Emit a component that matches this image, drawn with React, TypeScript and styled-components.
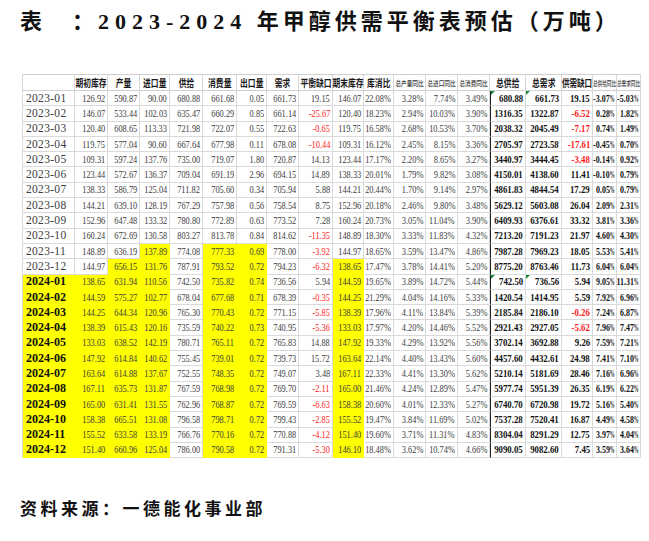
import React from "react";
import styled, { createGlobalStyle } from "styled-components";

type Column = {
  label: string;
  width: number;
  small?: boolean;
  headScale: number;
  textScale: number;
};

const columns: Column[] = [
  { label: "", width: 53, headScale: 1, textScale: 1 },
  { label: "期初库存", width: 33, headScale: 0.74, textScale: 0.76 },
  { label: "产量", width: 32, headScale: 0.74, textScale: 0.76 },
  { label: "进口量", width: 30, headScale: 0.74, textScale: 0.76 },
  { label: "供给", width: 33, headScale: 0.74, textScale: 0.76 },
  { label: "消费量", width: 34, headScale: 0.74, textScale: 0.76 },
  { label: "出口量", width: 30, headScale: 0.74, textScale: 0.76 },
  { label: "需求", width: 32, headScale: 0.74, textScale: 0.76 },
  { label: "平衡缺口", width: 34, headScale: 0.74, textScale: 0.76 },
  { label: "期末库存", width: 31, headScale: 0.74, textScale: 0.76 },
  { label: "库消比", width: 30, headScale: 0.74, textScale: 0.76 },
  { label: "总产量同比", width: 32, small: true, headScale: 0.8, textScale: 0.76 },
  { label: "总进口同比", width: 32, small: true, headScale: 0.8, textScale: 0.76 },
  { label: "总消费同比", width: 32, small: true, headScale: 0.8, textScale: 0.76 },
  { label: "总供给", width: 36, headScale: 0.74, textScale: 0.8 },
  { label: "总需求", width: 36, headScale: 0.74, textScale: 0.8 },
  { label: "供需缺口", width: 31, headScale: 0.72, textScale: 0.8 },
  { label: "总供给同比", width: 24, small: true, headScale: 0.66, textScale: 0.72 },
  { label: "总需求同比", width: 24, small: true, headScale: 0.66, textScale: 0.72 },
];

const data = `
2023-01 126.92 590.87 90.00 680.88 661.68 0.05 661.73 19.15 146.07 22.08% 3.28% 7.74% 3.49% 680.88 661.73 19.15 -3.07% -5.03%
2023-02 146.07 533.44 102.03 635.47 660.29 0.85 661.14 -25.67 120.40 18.23% 2.94% 10.03% 3.90% 1316.35 1322.87 -6.52 0.28% 1.82%
2023-03 120.40 608.65 113.33 721.98 722.07 0.55 722.63 -0.65 119.75 16.58% 2.68% 10.53% 3.70% 2038.32 2045.49 -7.17 0.74% 1.49%
2023-04 119.75 577.04 90.60 667.64 677.98 0.11 678.08 -10.44 109.31 16.12% 2.45% 8.15% 3.36% 2705.97 2723.58 -17.61 -0.45% 0.70%
2023-05 109.31 597.24 137.76 735.00 719.07 1.80 720.87 14.13 123.44 17.17% 2.20% 8.65% 3.27% 3440.97 3444.45 -3.48 -0.14% 0.92%
2023-06 123.44 572.67 136.37 709.04 691.19 2.96 694.15 14.89 138.33 20.01% 1.79% 9.82% 3.08% 4150.01 4138.60 11.41 -0.10% 0.79%
2023-07 138.33 586.79 125.04 711.82 705.60 0.34 705.94 5.88 144.21 20.44% 1.70% 9.14% 2.97% 4861.83 4844.54 17.29 0.05% 0.79%
2023-08 144.21 639.10 128.19 767.29 757.98 0.56 758.54 8.75 152.96 20.18% 2.46% 9.80% 3.48% 5629.12 5603.08 26.04 2.09% 2.31%
2023-09 152.96 647.48 133.32 780.80 772.89 0.63 773.52 7.28 160.24 20.73% 3.05% 11.04% 3.90% 6409.93 6376.61 33.32 3.81% 3.36%
2023-10 160.24 672.69 130.58 803.27 813.78 0.84 814.62 -11.35 148.89 18.30% 3.33% 11.83% 4.32% 7213.20 7191.23 21.97 4.60% 4.30%
2023-11 148.89 636.19 137.89 774.08 777.33 0.69 778.00 -3.92 144.97 18.65% 3.59% 13.47% 4.86% 7987.28 7969.23 18.05 5.53% 5.41%
2023-12 144.97 656.15 131.76 787.91 793.52 0.72 794.23 -6.32 138.65 17.47% 3.78% 14.41% 5.20% 8775.20 8763.46 11.73 6.04% 6.04%
2024-01 138.65 631.94 110.56 742.50 735.82 0.74 736.56 5.94 144.59 19.65% 3.89% 14.72% 5.44% 742.50 736.56 5.94 9.05% 11.31%
2024-02 144.59 575.27 102.77 678.04 677.68 0.71 678.39 -0.35 144.25 21.29% 4.04% 14.16% 5.33% 1420.54 1414.95 5.59 7.92% 6.96%
2024-03 144.25 644.34 120.96 765.30 770.43 0.72 771.15 -5.85 138.39 17.96% 4.11% 13.84% 5.39% 2185.84 2186.10 -0.26 7.24% 6.87%
2024-04 138.39 615.43 120.16 735.59 740.22 0.73 740.95 -5.36 133.03 17.97% 4.20% 14.46% 5.52% 2921.43 2927.05 -5.62 7.96% 7.47%
2024-05 133.03 638.52 142.19 780.71 765.11 0.72 765.83 14.88 147.92 19.33% 4.29% 13.92% 5.56% 3702.14 3692.88 9.26 7.59% 7.21%
2024-06 147.92 614.84 140.62 755.45 739.01 0.72 739.73 15.72 163.64 22.14% 4.40% 13.43% 5.60% 4457.60 4432.61 24.98 7.41% 7.10%
2024-07 163.64 614.88 137.67 752.55 748.35 0.72 749.07 3.48 167.11 22.33% 4.41% 13.30% 5.62% 5210.14 5181.69 28.46 7.16% 6.96%
2024-08 167.11 635.73 131.87 767.59 768.98 0.72 769.70 -2.11 165.00 21.46% 4.24% 12.89% 5.47% 5977.74 5951.39 26.35 6.19% 6.22%
2024-09 165.00 631.41 131.55 762.96 768.87 0.72 769.59 -6.63 158.38 20.60% 4.01% 12.33% 5.27% 6740.70 6720.98 19.72 5.16% 5.40%
2024-10 158.38 665.51 131.08 796.58 798.71 0.72 799.43 -2.85 155.52 19.47% 3.84% 11.69% 5.02% 7537.28 7520.41 16.87 4.49% 4.58%
2024-11 155.52 633.58 133.19 766.76 770.16 0.72 770.88 -4.12 151.40 19.60% 3.71% 11.31% 4.83% 8304.04 8291.29 12.75 3.97% 4.04%
2024-12 151.40 660.96 125.04 786.00 790.58 0.72 791.31 -5.30 146.10 18.48% 3.62% 10.74% 4.66% 9090.05 9082.60 7.45 3.59% 3.64%
`
  .trim()
  .split("\n")
  .map((line) => line.trim().split(/\s+/));

// which cells carry the yellow fill
const highlighted = (date: string): number[] => {
  if (date === "2023-11") return [3, 5, 6];
  if (date === "2023-12") return [2, 3, 5, 6, 9];
  if (date.startsWith("2024")) return [0, 1, 2, 3, 5, 6, 9];
  return [];
};

const GAP_COLUMNS = [8, 16];
const BOLD_FROM = 14;
const DIVIDER_COLUMN = 14;
const TICK_ROWS = ["2023-01", "2024-01"];

const renderValue = (value: string, narrowPercent: boolean) => {
  if (narrowPercent && value.endsWith("%")) {
    return (
      <>
        {value.slice(0, -1)}
        <Percent>%</Percent>
      </>
    );
  }
  return value;
};

const App: React.FunctionComponent = () => {
  const renderHeader = () =>
    columns.map((col, i) => (
      <HeadCell key={i} style={{ width: col.width }} $first={i === 0}>
        <Fit $align="center">
          <HeadText $small={col.small} $scale={col.headScale}>
            {col.label}
          </HeadText>
        </Fit>
      </HeadCell>
    ));

  const renderRows = () =>
    data.map((row) => {
      const date = row[0];
      const yellow = highlighted(date);
      const is2024 = date.startsWith("2024");
      return (
        <tr key={date}>
          {row.map((value, i) => {
            const negative = value.startsWith("-");
            const isDate = i === 0;
            return (
              <Cell
                key={i}
                $first={isDate}
                $yellow={yellow.includes(i)}
                $divider={i === DIVIDER_COLUMN}
                $tick={TICK_ROWS.includes(date) && (i === 14 || i === 15)}
              >
                <Fit $align={isDate ? "left" : "right"}>
                  <NumText
                    $date={isDate}
                    $scale={columns[i].textScale}
                    $bold={i >= BOLD_FROM || (isDate && is2024)}
                    $red={negative && GAP_COLUMNS.includes(i)}
                  >
                    {renderValue(value, i >= BOLD_FROM)}
                  </NumText>
                </Fit>
              </Cell>
            );
          })}
        </tr>
      );
    });

  return (
    <Page>
      <GlobalStyle />
      <Title>
        表<Spacer />：<Year>2023-2024</Year> 年甲醇供需平衡表预估（万吨）
      </Title>
      <Sheet>
        <thead>
          <tr>{renderHeader()}</tr>
        </thead>
        <tbody>{renderRows()}</tbody>
      </Sheet>
      <Source>资料来源：一德能化事业部</Source>
    </Page>
  );
};

export default App;

const GlobalStyle = createGlobalStyle`
  html, body {
    margin: 0;
    padding: 0;
    background: #ffffff;
  }
`;

const Page = styled.div`
  width: 649px;
  height: 541px;
  box-sizing: border-box;
  padding: 7px 0 0 20px;
  background: #ffffff;
  overflow: hidden;
`;

const Title = styled.div`
  height: 30px;
  line-height: 30px;
  font-family: "Liberation Serif", "Noto Sans CJK SC", serif;
  font-size: 22px;
  font-weight: 700;
  letter-spacing: 4px;
  color: #111111;
  white-space: nowrap;
`;

const Spacer = styled.span`
  display: inline-block;
  width: 26px;
`;

const Year = styled.span`
  letter-spacing: 6px;
`;

const Sheet = styled.table`
  margin: 37px 0 0 2px;
  border-collapse: separate;
  border-spacing: 0;
  table-layout: fixed;
  width: 619px;
`;

const HeadCell = styled.th<{ $first?: boolean }>`
  box-sizing: border-box;
  height: 17px;
  padding: 0;
  background: #ffffff;
  border-top: 1px solid #cfcfcf;
  border-right: 1px solid #d6d6d6;
  border-bottom: 1px solid #cfcfcf;
  border-left: ${(p) => (p.$first ? "1px solid #d6d6d6" : "none")};
  overflow: visible;
`;

const Cell = styled.td<{
  $first?: boolean;
  $yellow?: boolean;
  $divider?: boolean;
  $tick?: boolean;
}>`
  position: relative;
  box-sizing: border-box;
  height: 15.3px;
  padding: 0;
  background: ${(p) => (p.$yellow ? "#ffff00" : "#ffffff")};
  border-right: 1px solid ${(p) => (p.$yellow ? "transparent" : "#dadada")};
  border-bottom: 1px solid ${(p) => (p.$yellow ? "transparent" : "#dadada")};
  border-left: ${(p) =>
    p.$divider ? "1px solid #222222" : p.$first ? "1px solid #dadada" : "none"};
  overflow: visible;

  &::before {
    content: "";
    display: ${(p) => (p.$tick ? "block" : "none")};
    position: absolute;
    top: 0;
    left: 0;
    border-top: 4px solid #1f8a3a;
    border-right: 4px solid transparent;
  }
`;

const Fit = styled.div<{ $align: "left" | "right" | "center" }>`
  display: flex;
  justify-content: ${(p) =>
    p.$align === "right" ? "flex-end" : p.$align === "left" ? "flex-start" : "center"};
  align-items: center;
  padding: 0 ${(p) => (p.$align === "right" ? "2px" : "0")} 0
    ${(p) => (p.$align === "left" ? "3px" : "0")};
  height: 100%;
`;

const HeadText = styled.span<{ $small?: boolean; $scale: number }>`
  display: inline-block;
  flex-shrink: 0;
  white-space: nowrap;
  font-family: "Noto Sans CJK SC", sans-serif;
  font-size: ${(p) => (p.$small ? "7px" : "10.5px")};
  font-weight: ${(p) => (p.$small ? 500 : 700)};
  color: ${(p) => (p.$small ? "#3a3a3a" : "#1a1a1a")};
  line-height: 14px;
  transform: scaleX(${(p) => p.$scale});
  transform-origin: center center;
`;

const NumText = styled.span<{
  $bold?: boolean;
  $red?: boolean;
  $date?: boolean;
  $scale: number;
}>`
  display: inline-block;
  flex-shrink: 0;
  white-space: nowrap;
  font-family: "Liberation Serif", serif;
  font-size: ${(p) => (p.$date ? (p.$bold ? "12px" : "11.5px") : "11px")};
  letter-spacing: ${(p) => (p.$date && !p.$bold ? "0.3px" : "0")};
  font-weight: ${(p) => (p.$bold ? 700 : 400)};
  color: ${(p) => (p.$red ? "#ff1a1a" : p.$bold ? "#111111" : "#3c3c3c")};
  line-height: 13px;
  transform: scaleX(${(p) => p.$scale});
  transform-origin: ${(p) => (p.$date ? "left" : "right")} center;
`;

const Percent = styled.span`
  display: inline-block;
  width: 0.55em;
  transform: scaleX(0.62);
  transform-origin: left center;
`;

const Source = styled.div`
  margin-top: 38px;
  height: 24px;
  line-height: 24px;
  font-family: "Noto Sans CJK SC", sans-serif;
  font-size: 17px;
  font-weight: 700;
  letter-spacing: 3.5px;
  color: #111111;
`;
